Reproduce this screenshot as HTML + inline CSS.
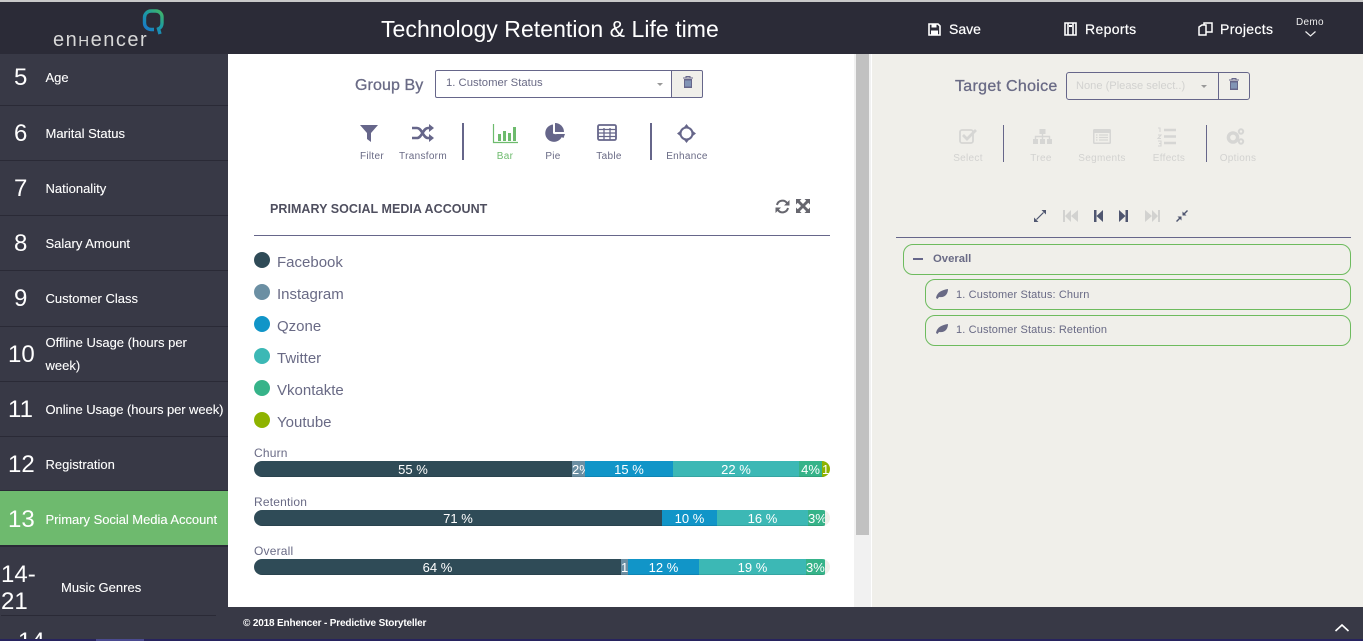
<!DOCTYPE html>
<html><head><meta charset="utf-8"><style>
html,body{margin:0;padding:0;width:1363px;height:641px;overflow:hidden;background:#fff}
body{font-family:"Liberation Sans","DejaVu Sans",sans-serif;position:relative}
.a{position:absolute;white-space:nowrap}
.r{position:absolute;left:0;width:228px;background:#383946;border-bottom:1px solid #2a2a36;box-sizing:border-box}
.n{position:absolute;left:14px;color:#fff;font-size:24px;line-height:30px}
.t{position:absolute;left:45.5px;color:#fff;font-size:13px;line-height:23px;white-space:nowrap;-webkit-text-stroke:.1px #fff}
.lbl{font-size:10px;color:#696a85;text-align:center;position:absolute;white-space:nowrap;transform:translateX(-50%);line-height:12px;letter-spacing:.3px}
.dim{color:#d2d2d0}
.v{position:absolute;width:2px;background:#66668a}
.leg{position:absolute;left:254px;width:16px;height:16px;border-radius:8px}
.lt{position:absolute;left:277px;font-size:15px;color:#696a85;line-height:18px}
.bl{position:absolute;left:254px;font-size:12px;color:#696a85;line-height:14px;letter-spacing:.2px}
.bar{position:absolute;left:254px;width:576px;height:16px;border-radius:8px;overflow:hidden;background:#f0efea}
.bar div{position:absolute;top:0;height:16px;color:#fff;font-size:13px;line-height:17px;text-align:center;overflow:hidden;white-space:nowrap;box-shadow:inset 0 -1px 0 rgba(0,0,0,.1)}
.node{position:absolute;border:1px solid #6dbb5e;border-radius:10px;box-sizing:border-box;right:12px}
.hd{color:#fff;font-size:14px;line-height:18px;top:20px;-webkit-text-stroke:.2px #fff}
svg{position:absolute;overflow:visible}
</style></head><body>
<!-- header -->
<div class="a" style="left:0;top:0;width:1363px;height:2px;background:#c9c9c9"></div>
<div class="a" style="left:0;top:2px;width:1363px;height:52px;background:#2b2b37"></div>
<svg style="left:142px;top:9px" width="24" height="28" viewBox="0 0 24 28"><defs><linearGradient id="g" gradientUnits="userSpaceOnUse" x1="3" y1="20" x2="20" y2="2"><stop offset="0" stop-color="#1a78c8"/><stop offset=".5" stop-color="#1b9aa5"/><stop offset="1" stop-color="#42b565"/></linearGradient></defs><path d="M12 20.500H9A6.500 6.500 0 0 1 2.500 14V8.500A6.500 6.500 0 0 1 9 2H14A6 6 0 0 1 20 8V14A6 6 0 0 1 16.500 19.800L18 25" fill="none" stroke="url(#g)" stroke-width="3.400"/></svg>
<div class="a" style="left:53px;top:30px;color:#d8d8d8;font-size:20px;line-height:20px;letter-spacing:1.5px">en<span style="font-size:15px">H</span>encer</div>
<div class="a" style="left:381px;top:15px;color:#fff;font-size:23px;line-height:28px;letter-spacing:.05px">Technology Retention &amp; Life time</div>

<svg style="left:928px;top:23px" width="13" height="13" viewBox="0 0 13 13"><path d="M1 1H10L12 3V12H1Z" fill="none" stroke="#fff" stroke-width="1.600"/><rect x="3.500" y="1" width="5" height="3.500" fill="#fff"/><rect x="3" y="7.500" width="7" height="4" fill="#fff"/></svg>
<div class="a hd" style="left:949px">Save</div>
<svg style="left:1064px;top:22px" width="13" height="14" viewBox="0 0 13 14"><path d="M1 1H12V13H1Z" fill="none" stroke="#fff" stroke-width="1.600"/><path d="M4 1V13M9 1V13" stroke="#fff" stroke-width="1.600"/><rect x="5" y="3" width="3" height="2" fill="#fff"/></svg>
<div class="a hd" style="left:1085px;letter-spacing:.35px">Reports</div>
<svg style="left:1198px;top:22px" width="15" height="14" viewBox="0 0 15 14"><path d="M1 5L4 3H8V13H1Z" fill="none" stroke="#fff" stroke-width="1.500"/><path d="M6 3V1H10L14 1V10H8" fill="none" stroke="#fff" stroke-width="1.500"/></svg>
<div class="a hd" style="left:1220px;letter-spacing:.35px">Projects</div>
<div class="a" style="left:1296px;top:16px;color:#eee;font-size:10px;line-height:13px;letter-spacing:.3px">Demo</div>
<svg style="left:1305px;top:31px" width="11" height="6"><path d="M.5 .5L5.500 5L10.500 .5" fill="none" stroke="#eee" stroke-width="1.200"/></svg>

<!-- sidebar -->
<div class="a" style="left:0;top:54px;width:228px;height:587px;background:#383946"></div>
<div class="r" style="top:54px;height:52px"><div class="n" style="top:9px">5</div><div class="t" style="top:12px">Age</div></div>
<div class="r" style="top:106px;height:55px"><div class="n" style="top:13px">6</div><div class="t" style="top:16px">Marital Status</div></div>
<div class="r" style="top:161px;height:55px"><div class="n" style="top:13px">7</div><div class="t" style="top:16px">Nationality</div></div>
<div class="r" style="top:216px;height:55px"><div class="n" style="top:13px">8</div><div class="t" style="top:16px">Salary Amount</div></div>
<div class="r" style="top:271px;height:56px"><div class="n" style="top:13px">9</div><div class="t" style="top:16px">Customer Class</div></div>
<div class="r" style="top:327px;height:55px"><div class="n" style="top:13px;left:8px">10</div><div class="t" style="top:4px">Offline Usage (hours per<br>week)</div></div>
<div class="r" style="top:382px;height:55px"><div class="n" style="top:13px;left:8px">11</div><div class="t" style="top:16px;letter-spacing:-.07px">Online Usage (hours per week)</div></div>
<div class="r" style="top:437px;height:54px"><div class="n" style="top:13px;left:8px">12</div><div class="t" style="top:16px">Registration</div></div>
<div class="r" style="top:491px;height:56px;background:#6eba6e;border-bottom:2px solid #2a2a36"><div class="n" style="top:14px;left:8px">13</div><div class="t" style="top:17px;letter-spacing:-.04px">Primary Social Media Account</div></div>
<div class="a" style="left:1px;top:561px;color:#fff;font-size:24px;line-height:27px;white-space:normal;width:40px">14-<br>21</div>
<div class="a" style="left:61px;top:576px;color:#fff;font-size:13px;line-height:23px;-webkit-text-stroke:.1px #fff">Music Genres</div>
<div class="a" style="left:1px;top:615px;width:215px;height:1px;background:#2a2a36"></div>
<div class="a" style="left:18px;top:627px;color:#fff;font-size:24px;line-height:30px;height:12px;overflow:hidden">14</div>

<!-- main -->
<div class="a" style="left:228px;top:54px;width:626px;height:553px;background:#fff"></div>
<div class="a" style="left:355px;top:76px;font-size:16px;color:#696a85;line-height:20px;letter-spacing:.1px;-webkit-text-stroke:.3px #696a85">Group By</div>
<div class="a" style="left:671px;top:71px;width:31px;height:26px;background:#f0efea;border-radius:0 2px 2px 0"></div>
<div class="a" style="left:435px;top:70px;width:268px;height:28px;border:1px solid #66668a;border-radius:2px;box-sizing:border-box"></div>
<div class="a" style="left:671px;top:71px;width:1px;height:26px;background:#66668a"></div>
<div class="a" style="left:446px;top:76px;font-size:11.3px;color:#696a85;line-height:14px">1. Customer Status</div>
<div class="a" style="left:657px;top:83px;width:0;height:0;border:3.500px solid transparent;border-top-color:#999"></div>
<svg style="left:683px;top:76px" width="10" height="12" viewBox="0 0 10 12"><path d="M0 2H10M3 2V.5H7V2" fill="none" stroke="#66668a" stroke-width="1"/><path d="M1 3H9V12H1Z" fill="#66668a"/><path d="M3 4.500V10.500M5 4.500V10.500M7 4.500V10.500" stroke="#9cc3e0" stroke-width="1"/></svg>

<svg style="left:360px;top:125px" width="18" height="17" viewBox="0 0 18 17"><path d="M0 0H18L11 8V17L7 14V8Z" fill="#66668a"/></svg>
<div class="lbl" style="left:372px;top:151px">Filter</div>
<svg style="left:412px;top:124px" width="22" height="18" viewBox="0 0 22 18"><path d="M0 4H5C10 4 11 14 16 14H19M0 14H5C10 14 11 4 16 4H19" fill="none" stroke="#66668a" stroke-width="2.600"/><path d="M17 0L22 4L17 8ZM17 10L22 14L17 18Z" fill="#66668a"/></svg>
<div class="lbl" style="left:423px;top:151px">Transform</div>
<div class="v" style="left:462px;top:123px;height:37px"></div>
<svg style="left:493px;top:124px" width="25" height="19" viewBox="0 0 25 19"><path d="M.5 0V18.500H25" fill="none" stroke="#6dbb6d" stroke-width="1.200"/><path d="M5 10h3v7H5zM10 7h3v10h-3zM15 9h3v8h-3zM20 3h3v14h-3z" fill="#6dbb6d"/></svg>
<div class="lbl" style="left:505px;top:151px;color:#6dbb6d">Bar</div>
<svg style="left:544px;top:123px" width="21" height="20" viewBox="0 0 21 20"><path d="M9 1.500A8.700 8.700 0 1 0 18 13.500L9 10.500Z" fill="#66668a"/><path d="M11 0A9 9 0 0 1 20 9H11Z" fill="#66668a"/><path d="M11 11H21L19.500 15Z" fill="#66668a"/></svg>
<div class="lbl" style="left:553px;top:151px">Pie</div>
<svg style="left:597px;top:124px" width="20" height="17" viewBox="0 0 20 17"><rect x="1" y="1" width="18" height="15" rx="1.500" fill="none" stroke="#66668a" stroke-width="1.800"/><path d="M1 5.500H19M1 9H19M1 12.500H19M7 4V16M13 4V16" stroke="#66668a" stroke-width="1.300"/></svg>
<div class="lbl" style="left:609px;top:151px">Table</div>
<div class="v" style="left:650px;top:123px;height:37px"></div>
<svg style="left:677px;top:124px" width="19" height="19" viewBox="0 0 19 19"><circle cx="9.500" cy="9.500" r="6" fill="none" stroke="#66668a" stroke-width="2"/><path d="M9.500 0L13 4.500H6ZM9.500 19L6 14.500H13ZM0 9.500L4.500 6V13ZM19 9.500L14.500 13V6Z" fill="#66668a"/></svg>
<div class="lbl" style="left:687px;top:151px">Enhance</div>

<div class="a" style="left:270px;top:202px;font-size:12.5px;font-weight:bold;color:#4f4f5f;line-height:15px;letter-spacing:.04px">PRIMARY SOCIAL MEDIA ACCOUNT</div>
<svg style="left:775px;top:199px" width="15" height="15" viewBox="0 0 15 15"><path d="M2 6A5.600 5.600 0 0 1 12 4M13 9A5.600 5.600 0 0 1 3 11" fill="none" stroke="#66666e" stroke-width="2"/><path d="M14.500 1V6.500H9ZM.5 14V8.500H6Z" fill="#66666e"/></svg>
<svg style="left:796px;top:199px" width="14" height="14" viewBox="0 0 14 14"><path d="M0 0H5.500L3.800 1.700L7 5L10.200 1.700L8.500 0H14V5.500L12.300 3.800L9 7L12.300 10.200L14 8.500V14H8.500L10.200 12.300L7 9L3.800 12.300L5.500 14H0V8.500L1.700 10.200L5 7L1.700 3.800L0 5.500Z" fill="#66666e"/></svg>
<div class="a" style="left:254px;top:235px;width:576px;height:1px;background:#66668a"></div>

<div class="leg" style="top:252px;background:#2f4b57"></div><div class="lt" style="top:254px">Facebook</div>
<div class="leg" style="top:284px;background:#6b8fa3"></div><div class="lt" style="top:286px">Instagram</div>
<div class="leg" style="top:316px;background:#1195c8"></div><div class="lt" style="top:318px">Qzone</div>
<div class="leg" style="top:348px;background:#3cb8b5"></div><div class="lt" style="top:350px">Twitter</div>
<div class="leg" style="top:380px;background:#36b389"></div><div class="lt" style="top:382px">Vkontakte</div>
<div class="leg" style="top:412px;background:#8eb300"></div><div class="lt" style="top:414px">Youtube</div>

<div class="bl" style="top:446px">Churn</div>
<div class="bar" style="top:461px">
<div style="left:0;width:318px;background:#2f4b57">55 %</div><div style="left:318px;width:13px;background:#6b8fa3;text-align:left">2%</div><div style="left:331px;width:88px;background:#1195c8">15 %</div><div style="left:419px;width:126px;background:#3cb8b5">22 %</div><div style="left:545px;width:23px;background:#36b389">4%</div><div style="left:568px;width:8px;background:#8eb300;text-align:left">1</div></div>
<div class="bl" style="top:495px">Retention</div>
<div class="bar" style="top:510px">
<div style="left:0;width:408px;background:#2f4b57">71 %</div><div style="left:408px;width:55px;background:#1195c8">10 %</div><div style="left:463px;width:91px;background:#3cb8b5">16 %</div><div style="left:554px;width:17px;background:#36b389;text-align:left">3%</div></div>
<div class="bl" style="top:544px">Overall</div>
<div class="bar" style="top:559px">
<div style="left:0;width:367px;background:#2f4b57">64 %</div><div style="left:367px;width:7px;background:#6b8fa3;text-align:left">1</div><div style="left:374px;width:71px;background:#1195c8">12 %</div><div style="left:445px;width:107px;background:#3cb8b5">19 %</div><div style="left:552px;width:19px;background:#36b389;text-align:left">3%</div></div>

<!-- scrollbar -->
<div class="a" style="left:854px;top:54px;width:17px;height:553px;background:#f1f1f1"></div>
<div class="a" style="left:856px;top:54px;width:13px;height:481px;background:#c1c1c1"></div>
<div class="a" style="left:871px;top:54px;width:1px;height:553px;background:#fff"></div>

<!-- right panel -->
<div class="a" style="left:872px;top:54px;width:491px;height:553px;background:#f0efea"></div>
<div class="a" style="left:955px;top:77px;font-size:16px;color:#696a85;line-height:20px;letter-spacing:.3px;-webkit-text-stroke:.3px #696a85">Target Choice</div>
<div class="a" style="left:1066px;top:72px;width:184px;height:28px;border:1px solid #66668a;border-radius:3px;box-sizing:border-box"></div>
<div class="a" style="left:1218px;top:72px;width:1px;height:28px;background:#66668a"></div>
<div class="a" style="left:1076px;top:79px;font-size:11.1px;color:#d2d2d0;line-height:14px">None (Please select..)</div>
<div class="a" style="left:1201px;top:85px;width:0;height:0;border:3.500px solid transparent;border-top-color:#999"></div>
<svg style="left:1229px;top:78px" width="10" height="12" viewBox="0 0 10 12"><path d="M0 2H10M3 2V.5H7V2" fill="none" stroke="#66668a" stroke-width="1"/><path d="M1 3H9V12H1Z" fill="#66668a"/><path d="M3 4.500V10.500M5 4.500V10.500M7 4.500V10.500" stroke="#9cc3e0" stroke-width="1"/></svg>

<svg style="left:959px;top:128px" width="18" height="16" viewBox="0 0 18 16"><rect x="1" y="2" width="13" height="13" rx="2" fill="none" stroke="#d6d6d4" stroke-width="1.800"/><path d="M4 7L8 11L17 2" fill="none" stroke="#d6d6d4" stroke-width="2.800"/></svg>
<div class="lbl dim" style="left:968px;top:153px">Select</div>
<div class="v" style="left:1003px;top:125px;height:37px;width:1px"></div>
<svg style="left:1033px;top:129px" width="19" height="15" viewBox="0 0 19 15"><path d="M6.500 0h6v5h-6zM0 10h5v5H0zM7 10h5v5H7zM14 10h5v5h-5z" fill="#d6d6d4"/><path d="M9.500 5V10M2.500 10V7.500H16.500V10" fill="none" stroke="#d6d6d4" stroke-width="1.400"/></svg>
<div class="lbl dim" style="left:1041px;top:153px">Tree</div>
<svg style="left:1093px;top:129px" width="18" height="15" viewBox="0 0 18 15"><rect x="0" y="0" width="18" height="15" rx="1.500" fill="#d6d6d4"/><rect x="1.500" y="4" width="15" height="9.500" fill="#f0efea"/><path d="M3 6H4.500M6 6H15M3 8.500H4.500M6 8.500H15M3 11H4.500M6 11H15" stroke="#d6d6d4" stroke-width="1.300"/></svg>
<div class="lbl dim" style="left:1102px;top:153px">Segments</div>
<svg style="left:1157px;top:127px" width="19" height="19" viewBox="0 0 19 19"><path d="M7 3H19M7 9.500H19M7 16H19" stroke="#d6d6d4" stroke-width="2.400"/><path d="M1 1H3V5M1 8H4L1 11.500H4M1 14H4V19H1M2 16.500H4" fill="none" stroke="#d6d6d4" stroke-width="1.100"/></svg>
<div class="lbl dim" style="left:1169px;top:153px">Effects</div>
<div class="v" style="left:1206px;top:125px;height:37px;width:1px"></div>
<svg style="left:1226px;top:128px" width="19" height="17" viewBox="0 0 19 17"><circle cx="7" cy="9.500" r="4.600" fill="none" stroke="#d6d6d4" stroke-width="3.400"/><circle cx="15" cy="3.500" r="2.200" fill="none" stroke="#d6d6d4" stroke-width="2"/><circle cx="15" cy="13.500" r="2.200" fill="none" stroke="#d6d6d4" stroke-width="2"/></svg>
<div class="lbl dim" style="left:1238px;top:153px">Options</div>

<svg style="left:1034px;top:210px" width="12" height="12" viewBox="0 0 12 12"><path d="M7.500 0H12V4.500ZM0 7.500V12H4.500Z" fill="#4f5670"/><path d="M9.500 2.500L2.500 9.500" stroke="#4f5670" stroke-width="1.200"/></svg>
<svg style="left:1063px;top:210px" width="15" height="12" viewBox="0 0 15 12"><path d="M0 0H2V12H0ZM2 6L8 0V12ZM8 6L15 0V12Z" fill="#d2d2d0"/></svg>
<svg style="left:1094px;top:210px" width="9" height="12" viewBox="0 0 9 12"><path d="M0 0H2.500V12H0ZM2.500 6L9 0V12Z" fill="#4f5670"/></svg>
<svg style="left:1119px;top:210px" width="9" height="12" viewBox="0 0 9 12"><path d="M6.500 0H9V12H6.500ZM6.500 6L0 12V0Z" fill="#4f5670"/></svg>
<svg style="left:1145px;top:210px" width="15" height="12" viewBox="0 0 15 12"><path d="M13 0H15V12H13ZM13 6L7 12V0ZM7 6L0 12V0Z" fill="#d2d2d0"/></svg>
<svg style="left:1176px;top:210px" width="12" height="12" viewBox="0 0 12 12"><path d="M6.500 5.500V1.500L8 3L11 0L12 1L9 4L10.500 5.500ZM5.500 6.500V10.500L4 9L1 12L0 11L3 8L1.500 6.500Z" fill="#4f5670"/></svg>

<div class="a" style="left:896px;top:237px;width:455px;height:1px;background:#66668a"></div>
<div class="node" style="left:903px;top:244px;height:31px"></div>
<div class="a" style="left:913px;top:258px;width:10px;height:2px;background:#66668a"></div>
<div class="a" style="left:933px;top:252px;font-size:11.3px;font-weight:bold;color:#696a85;line-height:14px">Overall</div>
<div class="node" style="left:925px;top:279px;height:31px"></div>
<svg style="left:936px;top:289px" width="12" height="10" viewBox="0 0 12 10"><path d="M0 9C1 3 6 1 12 0C12 5 9 9 3 8L1.500 10Z" fill="#696a85"/></svg>
<div class="a" style="left:956px;top:288px;font-size:11px;color:#696a85;line-height:14px;letter-spacing:.13px">1. Customer Status: Churn</div>
<div class="node" style="left:925px;top:315px;height:31px"></div>
<svg style="left:936px;top:324px" width="12" height="10" viewBox="0 0 12 10"><path d="M0 9C1 3 6 1 12 0C12 5 9 9 3 8L1.500 10Z" fill="#696a85"/></svg>
<div class="a" style="left:956px;top:323px;font-size:11px;color:#696a85;line-height:14px;letter-spacing:.13px">1. Customer Status: Retention</div>

<!-- footer -->
<div class="a" style="left:228px;top:607px;width:1135px;height:34px;background:#383946"></div>
<div class="a" style="left:243px;top:617px;font-size:10px;font-weight:bold;color:#fff;line-height:13px;letter-spacing:-.16px">© 2018 Enhencer - Predictive Storyteller</div>
<svg style="left:1335px;top:624px" width="14" height="8"><path d="M.5 7L7 1L13.500 7" fill="none" stroke="#fff" stroke-width="1.600"/></svg>
<div class="a" style="left:0;top:639px;width:1363px;height:2px;background:#27235e"></div>
<div class="a" style="left:96px;top:639px;width:48px;height:2px;background:#4a4a90"></div>
</body></html>
